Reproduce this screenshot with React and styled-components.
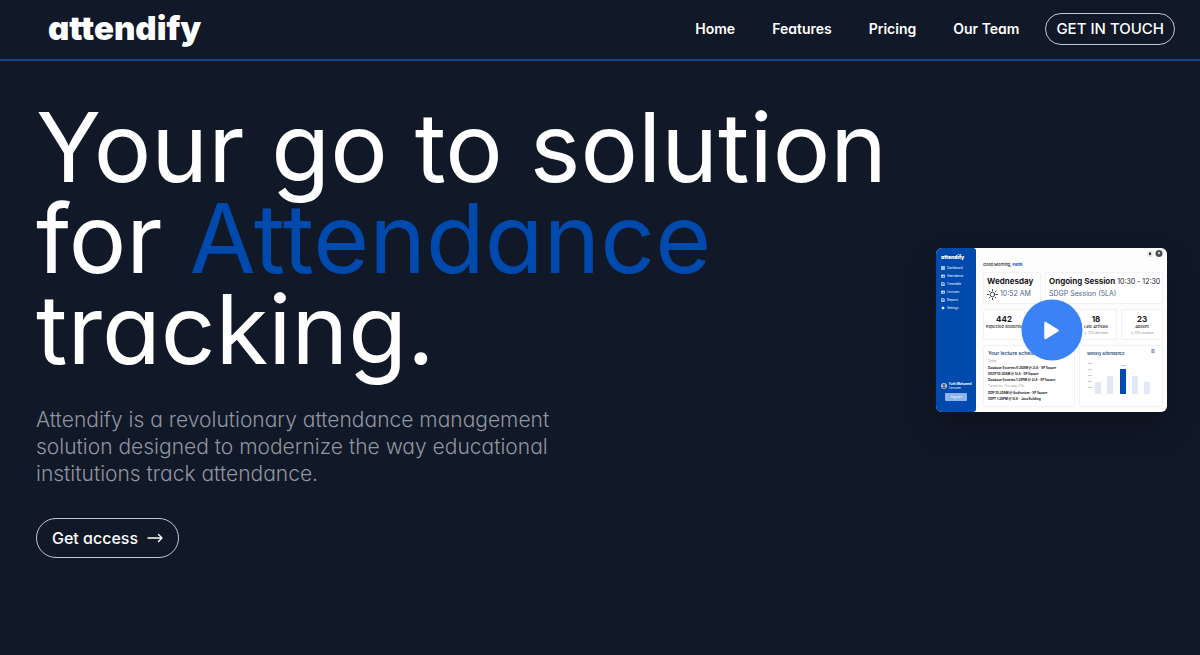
import React from "react"
import styled, { createGlobalStyle } from "styled-components"

const palette = {
  dark: "#111827",
  line: "#173f8c",
  brand: "#004aad",
  accent: "#3b82f6",
  white: "#ffffff",
  muted: "#9095a0",
  ink: "#17171c",
  slate: "#4f648f",
}

const GlobalStyle = createGlobalStyle`
  * {
    box-sizing: border-box;
  }

  body {
    margin: 0;
    background-color: ${palette.dark};
    color: ${palette.white};
    font-family: Inter, "Liberation Sans", sans-serif;
    font-feature-settings: "cv11";
  }

  h1, h2, h3, p, ul {
    margin: 0;
    padding: 0;
  }

  ul {
    list-style: none;
  }

  a {
    color: inherit;
    text-decoration: none;
  }

  button {
    font: inherit;
    font-feature-settings: inherit;
    color: inherit;
    cursor: pointer;
  }
`

const Header = styled.header`
  display: flex;
  align-items: center;
  justify-content: space-between;
  min-height: 61px;
  padding: 0 25px 2px 48px;
  border-bottom: 2px solid ${palette.line};
`

const Logo = styled.a`
  padding-bottom: 2px;
  font-size: 33px;
  font-weight: 900;
  line-height: 40px;
`

const Nav = styled.nav`
  display: flex;
  align-items: center;
  gap: 26px;
`

const NavList = styled.ul`
  display: flex;
  gap: 37px;
`

const NavLink = styled.a`
  font-size: 14px;
  font-weight: 600;
  line-height: 20px;
`

const PillButton = styled.button`
  display: flex;
  align-items: center;
  justify-content: center;
  gap: 9px;
  height: ${props => (props.$large ? 40 : 32)}px;
  padding: 0 ${props => (props.$large ? 15 : 10)}px;
  border: 1px solid #c3c6cc;
  border-radius: 20px;
  background: none;
  font-size: ${props => (props.$large ? 16 : 15)}px;
  font-weight: 500;
  white-space: nowrap;
`

const Hero = styled.main`
  display: flex;
  align-items: center;
  justify-content: space-between;
  gap: 36px;
  padding: 41px 33px 40px 36px;
`

const Intro = styled.div`
  flex: 1;
  display: flex;
  flex-direction: column;
  align-items: flex-start;
  gap: 31px;
`

const Title = styled.h1`
  font-size: 96px;
  font-weight: 400;
  line-height: 91px;
`

const Highlight = styled.span`
  color: ${palette.brand};
`

const Lead = styled.p`
  max-width: 520px;
  color: ${palette.muted};
  font-size: 21px;
  font-weight: 300;
  line-height: 27px;
`

const Preview = styled.section`
  position: relative;
  display: flex;
  width: 231px;
  min-height: 164px;
  border-radius: 6px;
  overflow: hidden;
  background-color: #fdfdfe;
  color: ${palette.ink};
  font-feature-settings: normal;
  box-shadow: 0 16px 32px rgba(0, 0, 0, 0.25);
`

const PlayButton = styled.button`
  position: absolute;
  top: 50%;
  left: 50%;
  display: flex;
  align-items: center;
  justify-content: center;
  width: 61px;
  height: 61px;
  padding: 0;
  border: 0;
  border-radius: 50%;
  background-color: ${palette.accent};
  transform: translate(-50%, -50%);
`

const Sidebar = styled.div`
  display: flex;
  flex-direction: column;
  width: 40px;
  padding: 6px 5px 11px;
  border-radius: 0 3px 3px 0;
  background-color: ${palette.brand};
  color: ${palette.white};
`

const SideLogo = styled.p`
  font-feature-settings: "cv11";
  font-size: 5px;
  font-weight: 900;
  line-height: 7px;
`

const SideList = styled.ul`
  flex: 1;
  padding-top: 3px;
`

const SideItem = styled.li`
  display: flex;
  align-items: center;
  gap: 2px;
  height: 8px;
  font-size: 3px;
  line-height: 4px;
`

const SideUser = styled.div`
  display: flex;
  align-items: center;
  gap: 2px;
  font-size: 3px;
  line-height: 4px;
  white-space: nowrap;

  svg {
    flex-shrink: 0;
  }
`

const SignOut = styled.button`
  height: 8px;
  margin: 3px 4px 0;
  padding: 0;
  border: 0;
  border-radius: 1px;
  background-color: #8fb4ea;
  font-size: 3px;
  line-height: 4px;
`

const Board = styled.div`
  flex: 1;
  display: flex;
  flex-direction: column;
  gap: 5px;
  min-width: 0;
  padding: 2px 4px 5px 7px;
`

const BoardTop = styled.div`
  display: flex;
  justify-content: flex-end;
  height: 7px;
`

const Greeting = styled.p`
  font-size: 4px;
  font-weight: 500;
  line-height: 5px;

  b {
    color: ${palette.brand};
  }
`

const CardRow = styled.div`
  display: grid;
  grid-template-columns: ${props => props.$columns};
  gap: 4px;
`

const Card = styled.div`
  min-width: 0;
  height: ${props => props.$height}px;
  padding: 3px ${props => props.$inset || 3}px;
  border: 1px solid #f1f2f5;
  border-radius: 2px;
  background-color: ${palette.white};
  overflow: hidden;
  white-space: nowrap;
`

const CardTitle = styled.h2`
  font-size: 8px;
  font-weight: 700;
  line-height: 11px;

  span {
    font-size: 7px;
    font-weight: 400;
  }
`

const CardLine = styled.p`
  display: flex;
  align-items: center;
  gap: 2px;
  color: ${palette.slate};
  font-size: 7px;
  line-height: 14px;
`

const Stat = styled(Card)`
  padding: 4px 0;
  text-align: center;
  font-size: 4px;
  font-weight: 500;
  line-height: 6px;
`

const StatValue = styled.p`
  font-size: 8px;
  font-weight: 700;
  line-height: 10px;
`

const StatNote = styled.p`
  color: #8a8d94;
  font-size: 3px;
  font-weight: 400;
`

const PanelTitle = styled.h3`
  display: flex;
  justify-content: space-between;
  color: #2c4a7c;
  font-size: ${props => (props.$small ? 4 : 5)}px;
  font-weight: 600;
  line-height: 9px;
`

const Day = styled.p`
  color: #9a9da5;
  font-size: 3px;
  line-height: 7px;
`

const Lecture = styled.p`
  font-size: 3px;
  font-weight: 700;
  line-height: 6px;
`

const icons = {
  grid: <path d="M1 1h4v4H1zM7 1h4v4H7zM1 7h4v4H1zM7 7h4v4H7z" />,
  card: <path d="M1 3h10v7H1zM1 5h10M3 8h3" />,
  file: <path d="M2 1h6l2 3v7H2zM4 6h4M4 8h4" />,
  cog: <path d="M6 1v10M1 6h10M3 3l6 6M9 3L3 9" />,
  lines: <path d="M1 2h10M1 6h6M1 10h10M9 4v4" />,
}

const SmallIcon = ({ name }) => (
  <svg width="4" height="4" viewBox="0 0 12 12" fill="none" stroke="currentColor" strokeWidth="2">
    {icons[name]}
  </svg>
)

const Sun = () => (
  <svg width="11" height="11" viewBox="0 0 22 22" fill="none" stroke="#2b2f3a" strokeWidth="1.8" strokeLinecap="round">
    <circle cx="11" cy="11" r="4.6" />
    <path d="M11 1v2.5M11 18.5V21M1 11h2.5M18.5 11H21M4 4l1.6 1.6M16.4 16.4L18 18M4 18l1.6-1.6M16.4 5.6L18 4" />
  </svg>
)

const Chart = () => (
  <svg width="66" height="38" viewBox="0 0 66 38">
    <g fill="#c9ccd3">
      <rect x="1" y="5" width="4" height="1" />
      <rect x="1" y="11" width="4" height="1" />
      <rect x="1" y="17" width="4" height="1" />
      <rect x="1" y="23" width="4" height="1" />
      <rect x="1" y="29" width="4" height="1" />
      <rect x="34" y="7" width="5" height="1" />
    </g>
    <g fill="#e3e9f2">
      <rect x="8" y="24" width="6" height="12" />
      <rect x="20" y="18" width="6" height="18" />
      <rect x="45" y="18" width="6" height="18" />
      <rect x="57" y="24" width="6" height="12" />
    </g>
    <rect x="33" y="11" width="6" height="25" fill="#004aad" />
  </svg>
)

const links = ["Home", "Features", "Pricing", "Our Team"]

const sideItems = [
  { icon: "grid", label: "Dashboard" },
  { icon: "card", label: "Attendance" },
  { icon: "file", label: "Timetable" },
  { icon: "card", label: "Lectures" },
  { icon: "file", label: "Reports" },
  { icon: "cog", label: "Settings" },
]

// the second card sits behind the play button
const stats = [
  { value: "442", label: "Expected Students" },
  {},
  { value: "18", label: "Late Arrivals", note: "◷ 12% decrease" },
  { value: "23", label: "Absent", note: "◷ 10% increase" },
]

const Dashboard = () => (
  <Preview>
    <Sidebar>
      <SideLogo>attendify</SideLogo>
      <SideList>
        {sideItems.map(item => (
          <SideItem key={item.label}>
            <SmallIcon name={item.icon} />
            {item.label}
          </SideItem>
        ))}
      </SideList>
      <SideUser>
        <svg width="6" height="6" viewBox="0 0 14 14">
          <circle cx="7" cy="7" r="7" fill="#b6c6df" />
          <circle cx="7" cy="5" r="3" fill="#52627e" />
          <path d="M2 12c1-5 9-5 10 0" fill="#52627e" />
        </svg>
        <div>
          <b>Fathi Mohamed</b>
          <p>Lecturer</p>
        </div>
      </SideUser>
      <SignOut type="button">Log out</SignOut>
    </Sidebar>
    <Board>
      <BoardTop>
        <svg width="17" height="7" viewBox="0 0 17 7">
          <circle cx="4" cy="4" r="3" fill="#dfe1e5" />
          <path d="M3 5V3l1-1 1 1v2z" fill="#33363d" />
          <circle cx="13" cy="3.5" r="3.5" fill="#4b4e55" />
          <circle cx="13" cy="3" r="1.2" fill="#c9ccd3" />
        </svg>
      </BoardTop>
      <Greeting>
        Good Morning, <b>Fathi</b>
      </Greeting>
      <CardRow $columns="58fr 118fr">
        <Card $height={32}>
          <CardTitle>Wednesday</CardTitle>
          <CardLine>
            <Sun />
            10:52 AM
          </CardLine>
        </Card>
        <Card $height={32}>
          <CardTitle>
            Ongoing Session <span>10:30 - 12:30</span>
          </CardTitle>
          <CardLine>SDGP Session (5LA)</CardLine>
        </Card>
      </CardRow>
      <CardRow $columns="repeat(4, 1fr)">
        {stats.map((stat, index) => (
          <Stat key={index} $height={31}>
            {stat.value && <StatValue>{stat.value}</StatValue>}
            {stat.label && <p>{stat.label}</p>}
            {stat.note && <StatNote>{stat.note}</StatNote>}
          </Stat>
        ))}
      </CardRow>
      <CardRow $columns="92fr 84fr">
        <Card $height={62} $inset={4}>
          <PanelTitle>Your lecture schedule</PanelTitle>
          <Day>Today</Day>
          <Lecture>Database Systems 8:30AM @ 3LA - SP Square</Lecture>
          <Lecture>SDGP 10:30AM @ 5LA - SP Square</Lecture>
          <Lecture>Database Systems 1:30PM @ 3LA - SP Square</Lecture>
          <Day>Tomorrow, Thursday 27th</Day>
          <Lecture>OOP 10:30AM @ Auditorium - SP Square</Lecture>
          <Lecture>SDPT 1:30PM @ 5LA - Java Building</Lecture>
        </Card>
        <Card $height={62} $inset={7}>
          <PanelTitle $small>
            Weekly Attendance
            <SmallIcon name="lines" />
          </PanelTitle>
          <Chart />
        </Card>
      </CardRow>
    </Board>
    <PlayButton type="button" aria-label="Play">
      <svg width="20" height="20" viewBox="0 0 20 20">
        <path d="M4 2.500v15l12-7.500z" fill="#fff" stroke="#fff" strokeWidth="2.500" strokeLinejoin="round" />
      </svg>
    </PlayButton>
  </Preview>
)

export default function App() {
  return (
    <>
      <GlobalStyle />
      <Header>
        <Logo href="#">attendify</Logo>
        <Nav>
          <NavList>
            {links.map(link => (
              <li key={link}>
                <NavLink href="#">{link}</NavLink>
              </li>
            ))}
          </NavList>
          <PillButton type="button">GET IN TOUCH</PillButton>
        </Nav>
      </Header>
      <Hero>
        <Intro>
          <Title>
            Your go to solution for <Highlight>Attendance</Highlight> tracking.
          </Title>
          <Lead>
            Attendify is a revolutionary attendance management solution designed
            to modernize the way educational institutions track attendance.
          </Lead>
          <PillButton type="button" $large>
            Get access
            <svg width="16" height="10" viewBox="0 0 16 10" fill="none" stroke="currentColor" strokeWidth="1.4" strokeLinecap="round" strokeLinejoin="round">
              <path d="M1 5h14M11.500 1.500L15 5l-3.500 3.500" />
            </svg>
          </PillButton>
        </Intro>
        <Dashboard />
      </Hero>
    </>
  )
}
